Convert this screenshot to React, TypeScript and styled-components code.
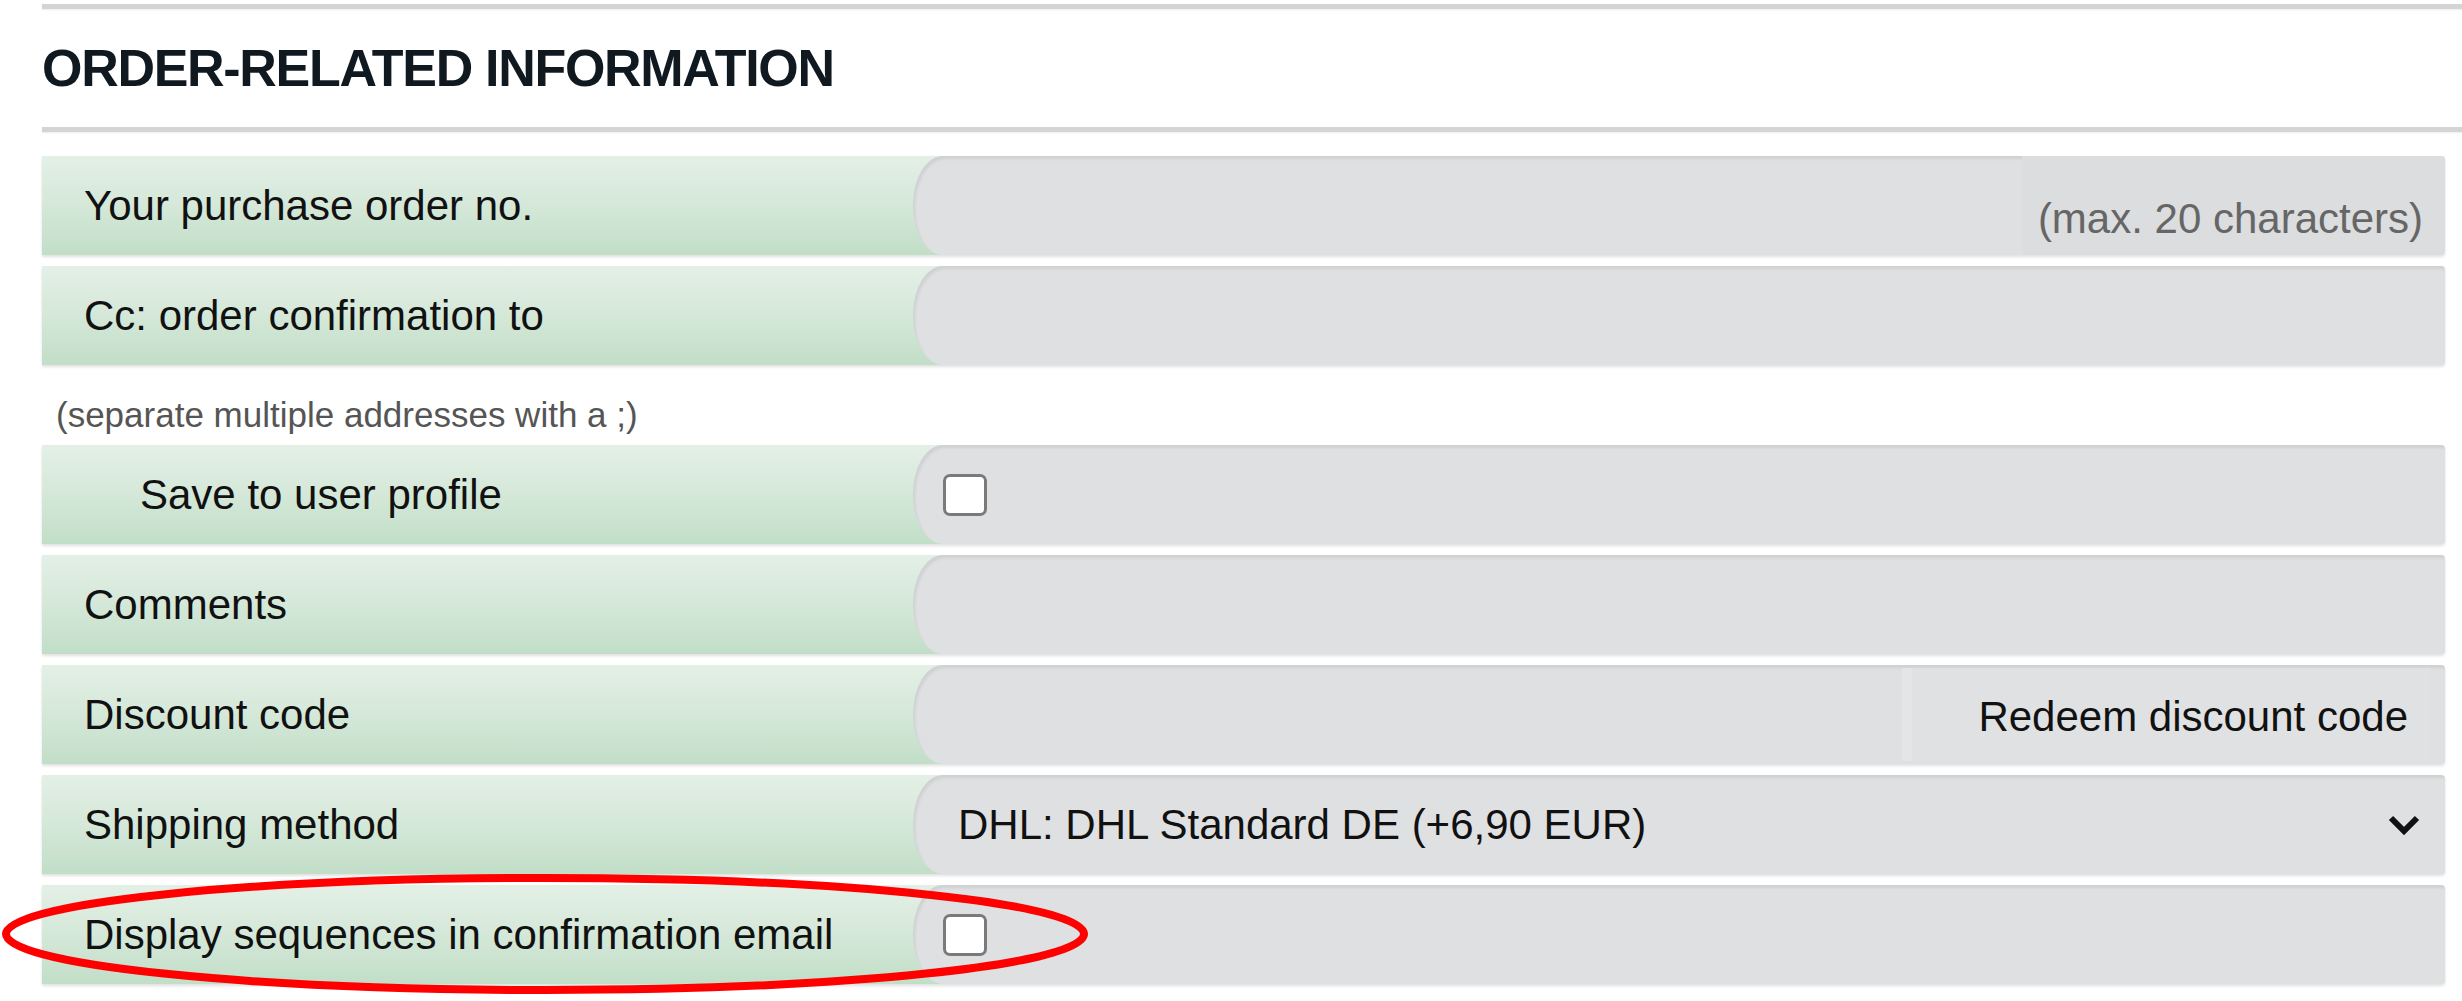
import React from "react";
import styled, { createGlobalStyle } from "styled-components";

const GlobalStyle = createGlobalStyle`
  body {
    margin: 0;
    background: #ffffff;
    font-family: "Liberation Sans", Arial, sans-serif;
  }
`;

type FieldRow = {
  label: string;
  indent?: boolean;
  kind: "text" | "checkbox" | "discount" | "select";
  hint?: string;
  value?: string;
};

const rowsTop: FieldRow[] = [
  { label: "Your purchase order no.", kind: "text", hint: "(max. 20 characters)" },
  { label: "Cc: order confirmation to", kind: "text" },
];

const rowsBottom: FieldRow[] = [
  { label: "Save to user profile", kind: "checkbox", indent: true },
  { label: "Comments", kind: "text" },
  { label: "Discount code", kind: "discount" },
  { label: "Shipping method", kind: "select", value: "DHL: DHL Standard DE (+6,90 EUR)" },
  { label: "Display sequences in confirmation email", kind: "checkbox" },
];

const Chevron = () => (
  <svg width="34" height="24" viewBox="0 0 34 24">
    <polyline points="4,5 17,18 30,5" fill="none" stroke="#111" strokeWidth="6" />
  </svg>
);

const renderField = (row: FieldRow) => {
  switch (row.kind) {
    case "checkbox":
      return (
        <Field>
          <Checkbox />
        </Field>
      );
    case "discount":
      return (
        <Field>
          <TextInput type="text" />
          <RedeemButton type="button">Redeem discount code</RedeemButton>
        </Field>
      );
    case "select":
      return (
        <Field>
          <SelectBox>
            <span>{row.value}</span>
            <Chevron />
          </SelectBox>
        </Field>
      );
    default:
      return (
        <Field>
          <TextInput type="text" />
          {row.hint && <Hint>{row.hint}</Hint>}
        </Field>
      );
  }
};

const renderRow = (row: FieldRow) => (
  <Row key={row.label}>
    <Label $indent={row.indent}>{row.label}</Label>
    {renderField(row)}
  </Row>
);

const App: React.FC = () => {
  return (
    <Page>
      <GlobalStyle />
      <Rule />
      <Heading>ORDER-RELATED INFORMATION</Heading>
      <Rule />

      <FormList>
        {rowsTop.map(renderRow)}
        <Note>(separate multiple addresses with a ;)</Note>
        {rowsBottom.map(renderRow)}
      </FormList>

      <Highlight viewBox="0 0 1090 130" width="1090" height="130">
        <ellipse cx="545" cy="64" rx="539" ry="56" fill="none" stroke="#ff0000" strokeWidth="8" />
      </Highlight>
    </Page>
  );
};

export default App;

const Page = styled.div`
  position: relative;
  padding: 4px 0 20px 42px;
  min-height: 1001px;
  box-sizing: border-box;
`;

const Rule = styled.div`
  height: 5px;
  background: #d4d4d4;
  box-shadow: 0 1px 2px rgba(0, 0, 0, 0.08);
`;

const Heading = styled.h2`
  margin: 0;
  height: 118px;
  display: flex;
  align-items: center;
  font-family: "Liberation Sans", Arial, sans-serif;
  font-size: 52px;
  font-weight: 700;
  color: #101820;
  letter-spacing: -1.3px;
`;

const FormList = styled.div`
  display: flex;
  flex-direction: column;
  margin: 24px 17px 0 0;
`;

const Row = styled.div`
  display: flex;
  height: 99px;
  margin-bottom: 11px;
  background: linear-gradient(180deg, #e4f0e6 0%, #d3e7d7 55%, #c1dec7 100%);
  box-shadow: 0 2px 3px rgba(0, 0, 0, 0.12);
  border-radius: 0 4px 4px 0;
`;

const Label = styled.div<{ $indent?: boolean }>`
  flex: 0 0 871px;
  box-sizing: border-box;
  display: flex;
  align-items: center;
  padding-left: ${(p) => (p.$indent ? "98px" : "42px")};
  font-size: 42px;
  color: #111;
`;

const Field = styled.div`
  flex: 1;
  display: flex;
  align-items: center;
  background: #dfe0e2;
  border-radius: 30px 4px 4px 30px / 49px 4px 4px 49px;
  box-shadow: inset 2px 3px 3px rgba(0, 0, 0, 0.07);
  padding-left: 30px;
  overflow: hidden;
`;

const TextInput = styled.input`
  flex: 1;
  align-self: stretch;
  min-width: 0;
  border: none;
  background: transparent;
  padding: 0 15px;
  font-family: "Liberation Sans", Arial, sans-serif;
  font-size: 42px;
  color: #111;
  outline: none;
`;

const Hint = styled.span`
  flex: 0 0 423px;
  align-self: stretch;
  box-sizing: border-box;
  display: flex;
  align-items: center;
  justify-content: flex-end;
  padding: 26px 22px 0 0;
  background: #dcdddf;
  font-size: 42px;
  color: #666;
`;

const RedeemButton = styled.button`
  flex: 0 0 528px;
  height: 93px;
  margin-right: 15px;
  border: none;
  border-left: 10px solid #e4e5e7;
  background: #e0e1e3;
  text-align: right;
  padding: 4px 22px 0 0;
  font-family: "Liberation Sans", Arial, sans-serif;
  font-size: 42px;
  color: #111;
  cursor: pointer;
`;

const SelectBox = styled.div`
  flex: 1;
  display: flex;
  align-items: center;
  justify-content: space-between;
  padding: 0 24px 0 15px;
  font-size: 42px;
  color: #111;
`;

const Checkbox = styled.span`
  width: 44px;
  height: 42px;
  box-sizing: border-box;
  background: #ffffff;
  border: 3px solid #7a7a7a;
  border-radius: 7px;
`;

const Note = styled.p`
  margin: 21px 0 13px 14px;
  font-size: 35px;
  line-height: 35px;
  color: #555;
`;

const Highlight = styled.svg`
  position: absolute;
  left: 0;
  top: 870px;
  pointer-events: none;
`;
